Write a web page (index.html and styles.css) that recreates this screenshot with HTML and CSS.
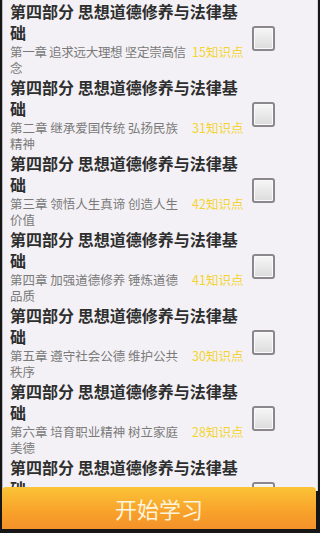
FILE: index.html
```html
<!DOCTYPE html>
<html lang="zh">
<head>
<meta charset="utf-8">
<link rel="stylesheet" href="styles.css">
</head>
<body>
<div class="screen">
  <div class="list">
    <div class="item">
      <div class="text">
        <div class="title">第四部分 思想道德修养与法律基础</div>
        <div class="sub"><span class="chapter tight">第一章 追求远大理想 坚定崇高信<br>念</span><span class="count">15知识点</span></div>
      </div>
      <div class="check"></div>
    </div>
    <div class="item">
      <div class="text">
        <div class="title">第四部分 思想道德修养与法律基础</div>
        <div class="sub"><span class="chapter">第二章 继承爱国传统 弘扬民族精神</span><span class="count">31知识点</span></div>
      </div>
      <div class="check"></div>
    </div>
    <div class="item">
      <div class="text">
        <div class="title">第四部分 思想道德修养与法律基础</div>
        <div class="sub"><span class="chapter">第三章 领悟人生真谛 创造人生价值</span><span class="count">42知识点</span></div>
      </div>
      <div class="check"></div>
    </div>
    <div class="item">
      <div class="text">
        <div class="title">第四部分 思想道德修养与法律基础</div>
        <div class="sub"><span class="chapter">第四章 加强道德修养 锤炼道德品质</span><span class="count">41知识点</span></div>
      </div>
      <div class="check"></div>
    </div>
    <div class="item">
      <div class="text">
        <div class="title">第四部分 思想道德修养与法律基础</div>
        <div class="sub"><span class="chapter">第五章 遵守社会公德 维护公共秩序</span><span class="count">30知识点</span></div>
      </div>
      <div class="check"></div>
    </div>
    <div class="item">
      <div class="text">
        <div class="title">第四部分 思想道德修养与法律基础</div>
        <div class="sub"><span class="chapter">第六章 培育职业精神 树立家庭美德</span><span class="count">28知识点</span></div>
      </div>
      <div class="check"></div>
    </div>
    <div class="item">
      <div class="text">
        <div class="title">第四部分 思想道德修养与法律基础</div>
        <div class="sub"><span class="chapter">第七章 增强法律意识 弘扬法治精神</span><span class="count">35知识点</span></div>
      </div>
      <div class="check"></div>
    </div>
  </div>
  <div class="start">开始学习</div>
</div>
</body>
</html>
```

FILE: styles.css
```css
html, body {
  margin: 0;
  padding: 0;
  height: 100%;
}
body {
  background: #161616;
  font-family: "Noto Sans CJK SC", "Noto Sans", sans-serif;
  overflow: hidden;
}
.screen {
  box-sizing: border-box;
  height: 533px;
  width: 320px;
  padding: 0 2px 4px 2px;
  display: flex;
  flex-direction: column;
}
.list {
  flex: 1;
  overflow: hidden;
  background: #f3f1f5;
  border-left: 1px solid #bdbbbf;
  border-right: 1px solid #d6d4d8;
}
.item {
  height: 76px;
  display: flex;
  align-items: center;
  padding-left: 7px;
}
.text {
  width: 240px;
  align-self: flex-start;
  padding-top: 1px;
}
.title {
  font-size: 16px;
  line-height: 21px;
  font-weight: bold;
  color: #2e2e2e;
  width: 240px;
}
.sub {
  display: flex;
  align-items: flex-start;
  margin-top: 1px;
}
.chapter {
  width: 178px;
  flex: none;
  font-size: 12.5px;
  line-height: 16px;
  color: #7a7a7a;
  margin-right: 4px;
}
.chapter.tight {
  letter-spacing: -0.3px;
  white-space: nowrap;
}
.count {
  font-size: 12.5px;
  line-height: 16px;
  color: #f4d435;
  white-space: nowrap;
}
.check {
  width: 19px;
  height: 21px;
  margin-left: 2px;
  border: 2px solid #8a888c;
  border-radius: 3px;
  background: linear-gradient(#f6f6f6, #dcdcdc);
  box-shadow: inset 0 0 0 1px #fafafa;
}
.start {
  height: 42px;
  margin-top: -4px;
  margin-right: 2px;
  border-radius: 4px 4px 0 0;
  background: linear-gradient(#fbc437, #f8a12a 60%, #f4912a);
  color: #fdf4dc;
  font-size: 22px;
  line-height: 42px;
  text-align: center;
  position: relative;
}
```
